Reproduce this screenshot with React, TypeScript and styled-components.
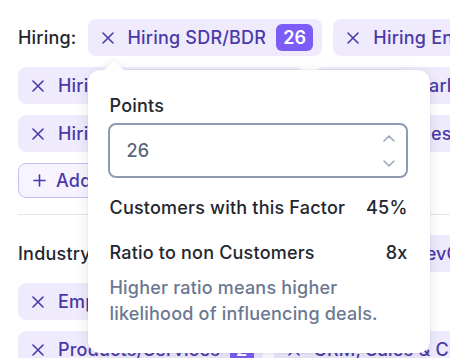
import styled, { createGlobalStyle } from 'styled-components';

const GlobalStyle = createGlobalStyle`
  html, body {
    margin: 0;
    padding: 0;
    background: #ffffff;
    overflow: hidden;
  }
  body {
    font-family: Inter, "Noto Sans", "Liberation Sans", sans-serif;
    letter-spacing: 0.2px;
    -webkit-font-smoothing: antialiased;
  }
`;

// Whole filter page, wider than the window so chips run off the right edge
const Page = styled.div`
  width: 760px;
  height: 358px;
  padding: 19px 0 0 18px;
  box-sizing: border-box;
  overflow: hidden;
`;

const Section = styled.div`
  display: flex;
  flex-direction: column;
  gap: 11px;
`;

const Row = styled.div`
  display: flex;
  align-items: center;
  gap: 11px;
  white-space: nowrap;
`;

const Label = styled.span`
  font-size: 18px;
  font-weight: 500;
  color: #23262f;
  line-height: 37px;
`;

const Chip = styled.div<{ $anchor?: boolean }>`
  position: ${(p) => (p.$anchor ? 'relative' : 'static')};
  display: flex;
  align-items: center;
  height: 37px;
  padding: 0 9px 0 14px;
  border-radius: 8px;
  background: #efebfd;
  color: #4a3aa8;
  font-size: 18px;
  font-weight: 500;
  flex-shrink: 0;
`;

const ChipText = styled.span`
  margin-left: 14px;
  margin-right: 5px;
`;

const Badge = styled.span<{ $small?: boolean }>`
  display: inline-flex;
  align-items: center;
  justify-content: center;
  height: 27px;
  padding: 0 ${(p) => (p.$small ? '6px' : '7px')};
  margin-left: 5px;
  border-radius: 6px;
  background: #7b5cf6;
  color: #ffffff;
  font-size: 18px;
  font-weight: 600;
`;

const AddButton = styled.button`
  display: flex;
  align-items: center;
  gap: 10px;
  height: 35px;
  padding: 0 16px 0 14px;
  border: 1.5px solid #c9bcfb;
  border-radius: 8px;
  background: #f7f4ff;
  color: #4a3aa8;
  font-family: inherit;
  letter-spacing: inherit;
  font-size: 18px;
  font-weight: 500;
`;

const Divider = styled.hr`
  border: none;
  border-top: 1px solid #e6e7ee;
  margin: 16px 0 20px;
`;

// Popover over the chips
const Popover = styled.div`
  position: absolute;
  top: calc(100% + 14px);
  left: 0;
  z-index: 10;
  width: 342px;
  box-sizing: border-box;
  padding: 24px 22px 26px 20px;
  background: #ffffff;
  border-radius: 12px;
  box-shadow: 0 3px 14px rgba(30, 30, 60, 0.1), 0 0 0 1px rgba(30, 30, 60, 0.035);
  display: flex;
  flex-direction: column;
  color: #23262f;
  white-space: normal;

  &::before {
    content: '';
    position: absolute;
    top: -7px;
    left: 19px;
    width: 14px;
    height: 14px;
    background: #ffffff;
    transform: rotate(45deg);
    box-shadow: -2px -2px 4px rgba(30, 30, 60, 0.05);
  }
`;

const FieldLabel = styled.div`
  font-size: 18px;
  font-weight: 500;
  line-height: 24px;
  margin-left: 2px;
`;

const NumberBox = styled.div`
  margin-top: 5px;
  height: 55px;
  box-sizing: border-box;
  border: 2px solid #8f9ab3;
  border-radius: 8px;
  display: flex;
  align-items: center;
  justify-content: space-between;
  padding: 0 11px 0 17px;
  font-size: 18px;
  color: #5d6679;
`;

const Spinner = styled.div`
  display: flex;
  flex-direction: column;
  gap: 18px;
  color: #9ca5b8;
`;

const StatRow = styled.div<{ $top: number }>`
  display: flex;
  justify-content: space-between;
  margin-top: ${(p) => p.$top}px;
  padding-left: 2px;
  font-size: 18px;
  font-weight: 500;
  line-height: 24px;
`;

const Hint = styled.p`
  margin: 10px 0 0 2px;
  font-size: 18px;
  line-height: 26px;
  color: #6b7890;
`;

const XIcon = () => (
  <svg width="12" height="12" viewBox="0 0 12 12" fill="none" stroke="currentColor" strokeWidth="1.6" strokeLinecap="round">
    <path d="M1 1l10 10M11 1L1 11" />
  </svg>
);

const Chevron = ({ up }: { up?: boolean }) => (
  <svg width="12" height="7" viewBox="0 0 12 7" fill="none" stroke="currentColor" strokeWidth="1.5" strokeLinecap="round" strokeLinejoin="round">
    <path d={up ? 'M1 6l5-5 5 5' : 'M1 1l5 5 5-5'} />
  </svg>
);

const Tag = ({ text, count, small }: { text: string; count?: number; small?: boolean }) => (
  <Chip>
    <XIcon />
    <ChipText>{text}</ChipText>
    {count !== undefined && <Badge $small={small}>{count}</Badge>}
  </Chip>
);

export default function App() {
  return (
    <>
      <GlobalStyle />
      <Page>
        <Section>
          <Row>
            <Label>Hiring:</Label>
            <Chip $anchor>
              <XIcon />
              <ChipText>Hiring SDR/BDR</ChipText>
              <Badge>26</Badge>
              <Popover>
                <FieldLabel>Points</FieldLabel>
                <NumberBox>
                  <span>26</span>
                  <Spinner>
                    <Chevron up />
                    <Chevron />
                  </Spinner>
                </NumberBox>
                <StatRow $top={18}>
                  <span>Customers with this Factor</span>
                  <span>45%</span>
                </StatRow>
                <StatRow $top={21}>
                  <span>Ratio to non Customers</span>
                  <span>8x</span>
                </StatRow>
                <Hint>Higher ratio means higher likelihood of influencing deals.</Hint>
              </Popover>
            </Chip>
            <Tag text="Hiring Engineers" />
          </Row>
          <Row>
            <Tag text="Hiring Account Executives" />
            <Tag text="Hiring Marketing" />
          </Row>
          <Row>
            <Tag text="Hiring Customer Success" />
            <Tag text="Hiring Sales" />
          </Row>
          <Row>
            <AddButton>
              <svg width="13" height="13" viewBox="0 0 13 13" fill="none" stroke="currentColor" strokeWidth="1.6" strokeLinecap="round">
                <path d="M6.5 1v11M1 6.5h11" />
              </svg>
              Add
            </AddButton>
          </Row>
        </Section>
        <Divider />
        <Section>
          <Row>
            <Label>Industry:</Label>
            <Tag text="Software Development" />
            <Tag text="DevOps" />
          </Row>
          <Row>
            <Tag text="Employment Services" />
            <Tag text="Marketing" />
          </Row>
          <Row>
            <Tag text="Products/Services" count={2} small />
            <Tag text="CRM, Sales & Customer" />
          </Row>
        </Section>
      </Page>
    </>
  );
}
